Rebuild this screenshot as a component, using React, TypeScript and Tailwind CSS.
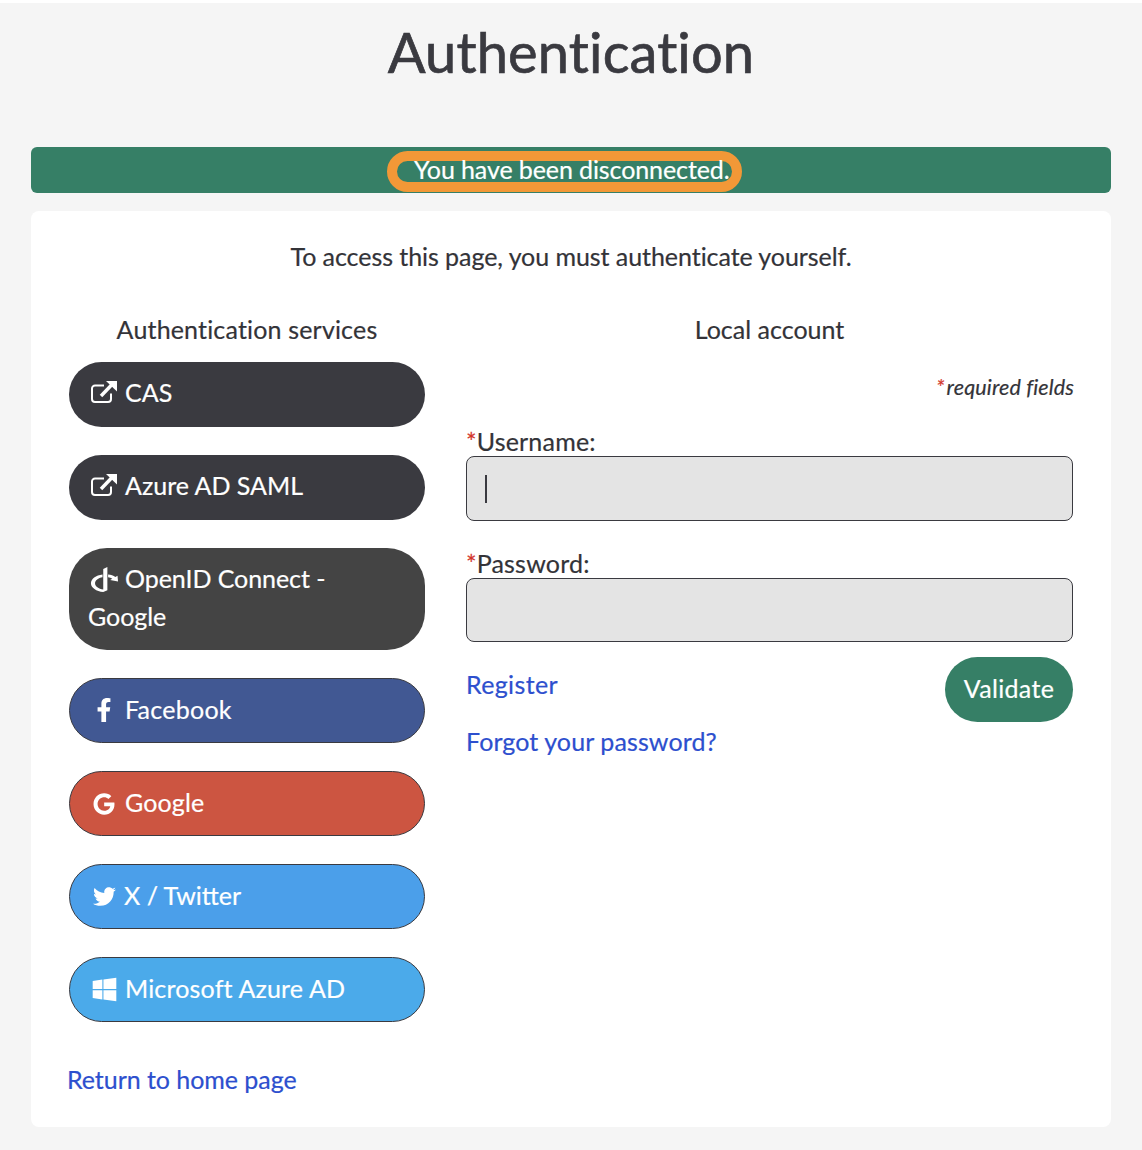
import { FaFacebookF, FaGoogle, FaTwitter, FaWindows, FaOpenid } from "react-icons/fa";

function ExternalIcon() {
  return (
    <svg viewBox="0 0 26 22" className="w-[26px] h-[22px] shrink-0" fill="none" stroke="currentColor">
      <path d="M20 12.5V18a3 3 0 0 1-3 3H4a3 3 0 0 1-3-3V7.5a3 3 0 0 1 3-3h9" strokeWidth="2" />
      <path d="M10 15 21 3.5" strokeWidth="3.4" />
      <path d="M15 0h11v10.5z" fill="currentColor" stroke="none" />
    </svg>
  );
}

function ServiceButton({ color, border, tall, align, label, icon, children }: { color: string; border?: boolean; tall?: boolean; align: string; label?: string; icon: React.ReactNode; children: React.ReactNode }) {
  return (
    <a className={`block w-full rounded-[38px] text-white text-[25px] px-[18px] border ${color} ${tall ? "leading-[38px] border-transparent pt-[10px] pb-[14px]" : border ? "leading-[37px] border-[#3a3a40] pt-[12px] pb-[14px]" : "leading-[37px] border-transparent pt-[11px] pb-[15px]"}`}>
      <span className={`inline-flex w-[32px] items-center justify-center mr-[5px] ${align}`}>{icon}</span>
      <span className={label}>{children}</span>
    </a>
  );
}

export default function App() {
  return (
    <div className="min-h-[1150px] bg-[#f5f5f5] border-t-[3px] border-white font-['Lato','Liberation_Sans',sans-serif] text-[#333338] [-webkit-text-stroke:0.2px]">
      <div className="px-[31px]">
        <h1 className="text-center text-[56px] leading-[68px] pt-[15px] mb-[61px] font-normal text-[#3a3a40] tracking-[0.15px] [font-variant-ligatures:none] [-webkit-text-stroke:0.7px]">Authentication</h1>

        <div className="h-[46px] bg-[#367f66] rounded-[6px] flex items-start justify-center pt-[4px] mb-[18px]">
          <span className="border-[10px] border-[#f29837] rounded-[22px] h-[41px] w-[355px] mr-[14px] pr-[2px] text-white text-[25px] leading-[17px] text-right whitespace-nowrap tracking-[-0.1px]">
            You have been disconnected.
          </span>
        </div>

        <div className="bg-white rounded-[8px] h-[916px] px-[38px]">
          <p className="text-center text-[25px] leading-[38px] pt-[26px] mb-[35px] [font-variant-ligatures:none] tracking-[-0.06px]">To access this page, you must authenticate yourself.</p>

          <div className="flex gap-[41px]">
            <div className="w-[356px]">
              <h2 className="text-center text-[25px] leading-[38px] font-normal mb-[14px] tracking-[0.17px] [font-variant-ligatures:none]">Authentication services</h2>
              <div className="flex flex-col gap-[28px]">
                <ServiceButton color="bg-[#3a3a40]" align="align-[-1px]" icon={<ExternalIcon />}>CAS</ServiceButton>
                <ServiceButton color="bg-[#3a3a40]" align="align-[-1px]" icon={<ExternalIcon />}>Azure AD SAML</ServiceButton>
                <ServiceButton color="bg-[#444444]" tall align="align-[-7px]" label="tracking-[-0.06px]" icon={<FaOpenid className="text-[31px]" />}>OpenID Connect - Google</ServiceButton>
                <ServiceButton color="bg-[#415893]" border align="align-[-3px]" label="tracking-[0.25px]" icon={<FaFacebookF className="text-[24px]" />}>Facebook</ServiceButton>
                <ServiceButton color="bg-[#cc5541]" border align="align-[-3px]" label="tracking-[0.15px]" icon={<FaGoogle className="text-[22px]" />}>Google</ServiceButton>
                <ServiceButton color="bg-[#4b9fea]" border align="align-[-3px]" label="ml-[-1px]" icon={<FaTwitter className="text-[23px]" />}>X / Twitter</ServiceButton>
                <ServiceButton color="bg-[#4baaea]" border align="align-[-5px]" label="tracking-[0.17px]" icon={<FaWindows className="text-[27px]" />}>Microsoft Azure AD</ServiceButton>
              </div>
              <a className="block text-[25px] leading-[38px] text-[#2d4fce] mt-[38px] ml-[-2px] tracking-[-0.05px]">Return to home page</a>
            </div>

            <div className="flex-1">
              <h2 className="text-center text-[25px] leading-[38px] font-normal mb-[24px]">Local account</h2>
              <p className="text-right text-[21.5px] leading-[30px] italic mr-[-1px] mb-[25px]"><span className="text-[#d3352b] mr-[-3px]">*</span> <span className="tracking-[0.15px]">required fields</span></p>

              <label className="block text-[25px] leading-[28px] mb-[1px]"><span className="text-[#d3352b]">*</span><span className="tracking-[0.2px]">Username:</span></label>
              <div className="h-[65px] bg-[#e4e4e4] border border-[#3a3a40] rounded-[8px] flex items-center pl-[18px]">
                <span className="w-[2px] h-[28px] bg-[#3a3a40]" />
              </div>

              <label className="block text-[25px] leading-[28px] mt-[28px] mb-[1px]"><span className="text-[#d3352b]">*</span><span className="tracking-[0.2px]">Password:</span></label>
              <div className="h-[64px] bg-[#e4e4e4] border border-[#3a3a40] rounded-[8px]" />

              <div className="flex justify-between mt-[15px]">
                <div className="text-[25px] leading-[38px] text-[#2d4fce]">
                  <a className="block mt-[8px] tracking-[0.35px]">Register</a>
                  <a className="block mt-[19px] tracking-[0.1px]">Forgot your password?</a>
                </div>
                <button className="h-[65px] w-[128px] rounded-[33px] bg-[#367f66] text-white text-[25px] pb-[2px] tracking-[0.35px]">Validate</button>
              </div>
            </div>
          </div>
        </div>
      </div>
    </div>
  );
}
